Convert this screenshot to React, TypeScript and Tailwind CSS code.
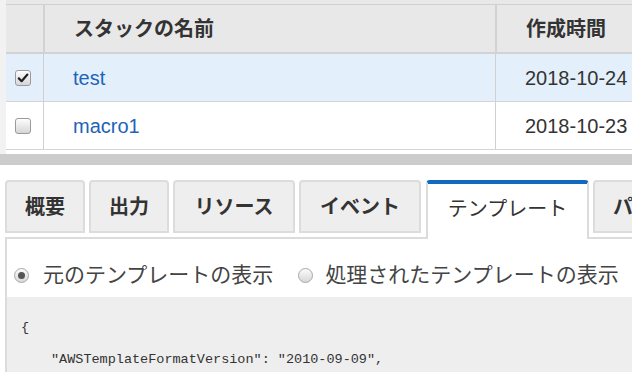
import React from "react";

function Checkbox({ checked }: { checked?: boolean }) {
  return (
    <div className="w-[16px] h-[16px] rounded-[3px] border border-[#9a9a9a] bg-gradient-to-b from-[#fdfdfd] to-[#d6d6d6] flex items-center justify-center shadow-[inset_0_1px_1px_rgba(255,255,255,0.8)]">
      {checked && (
        <svg width="12" height="12" viewBox="0 0 12 12">
          <path d="M1.8 6.4 L4.6 9.2 L10.4 2.6" fill="none" stroke="#222" strokeWidth="2.2" strokeLinecap="round" strokeLinejoin="round" />
        </svg>
      )}
    </div>
  );
}

function Radio({ checked }: { checked?: boolean }) {
  return (
    <div className="w-[15px] h-[15px] rounded-full border border-[#a8a8a8] bg-gradient-to-b from-[#fbfbfb] to-[#d8d8d8] flex items-center justify-center">
      {checked && <div className="w-[7px] h-[7px] rounded-full bg-[#555]" />}
    </div>
  );
}

export default function App() {
  return (
    <div className="w-[632px] h-[372px] overflow-hidden bg-white font-['Liberation_Sans','Noto_Sans_CJK_JP',sans-serif] text-[#333]">
      <div className="w-[900px]">
        {/* table */}
        <div className="flex">
          <div className="w-[6px] bg-[#f2f2f2]" />
          <div className="flex-1">
            <div className="h-[4px] bg-[#e8e8e8]" />
            <div className="h-px bg-[#d0d0d0]" />
            <div className="flex h-[49px] bg-[#e8e8e8] border-b-2 border-[#d2d2d2] text-[20px] font-bold text-[#333]">
              <div className="w-[39px] border-r-2 border-[#d2d2d2]" />
              <div className="w-[452px] border-r-2 border-[#d2d2d2] pl-[29px] flex items-center">スタックの名前</div>
              <div className="pl-[29px] flex items-center">作成時間</div>
            </div>
            <div className="flex h-[48px] bg-[#e3f0fc] border-b border-[#d4d4d4] text-[20px]">
              <div className="w-[38px] border-r border-[#d0d0d0] flex items-center pl-[9px]">
                <Checkbox checked />
              </div>
              <div className="w-[452px] border-r border-[#d0d0d0] pl-[29px] flex items-center text-[#1e63b8]">test</div>
              <div className="pl-[29px] flex items-center text-[#333]">2018-10-24 16:47:55 UTC+0900</div>
            </div>
            <div className="flex h-[48px] bg-white border-b border-[#d4d4d4] text-[20px]">
              <div className="w-[38px] border-r border-[#d0d0d0] flex items-center pl-[9px]">
                <Checkbox />
              </div>
              <div className="w-[452px] border-r border-[#d0d0d0] pl-[29px] flex items-center text-[#1e63b8]">macro1</div>
              <div className="pl-[29px] flex items-center text-[#333]">2018-10-23 20:25:12 UTC+0900</div>
            </div>
            <div className="h-[4px] bg-white" />
          </div>
        </div>
        <div className="h-[11px] bg-[#cccccc]" />
        <div className="h-[15px] bg-white" />

        {/* tabs */}
        <div className="flex items-start gap-[4px] pl-[5px] text-[20px] font-bold text-[#333]">
          <div className="w-[80px] h-[53px] border-2 border-[#dcdcdc] rounded-t-[4px] bg-[#eeeeee] flex items-center justify-center">概要</div>
          <div className="w-[80px] h-[53px] border-2 border-[#dcdcdc] rounded-t-[4px] bg-[#eeeeee] flex items-center justify-center">出力</div>
          <div className="w-[122px] h-[53px] border-2 border-[#dcdcdc] rounded-t-[4px] bg-[#eeeeee] flex items-center justify-center">リソース</div>
          <div className="w-[122px] h-[53px] border-2 border-[#dcdcdc] rounded-t-[4px] bg-[#eeeeee] flex items-center justify-center">イベント</div>
          <div className="relative z-10 ml-[1px] w-[163px] h-[59px] -mb-[2px] border-t-[4px] border-x-2 border-t-[#1269c0] border-x-[#dcdcdc] rounded-t-[4px] bg-white flex justify-center pt-[11px] font-normal text-[#333]">
            <span className="leading-[28px]">テンプレート</span>
          </div>
          <div className="h-[53px] border-2 border-[#dcdcdc] rounded-t-[4px] bg-[#eeeeee] flex items-center px-[18px]">パラメータ</div>
        </div>

        {/* panel */}
        <div className="ml-[5px] border-t-2 border-l-2 border-[#dcdcdc]">
          <div className="flex items-center pt-[22px] pb-[8px] h-[58px] text-[21px] text-[#444]">
            <div className="ml-[7px]">
              <Radio checked />
            </div>
            <span className="ml-[14px] leading-[28px]">元のテンプレートの表示</span>
            <div className="ml-[25px]">
              <Radio />
            </div>
            <span className="ml-[12px] leading-[28px]">処理されたテンプレートの表示</span>
          </div>
          <div className="bg-[#eeeeee] h-[120px] pt-[15px] pl-[14px] font-['Liberation_Mono',monospace] text-[13.5px] leading-[32px] text-[#333] whitespace-pre">
            <div>{"{"}</div>
            <div className="pl-[30px]">{"\"AWSTemplateFormatVersion\": \"2010-09-09\","}</div>
          </div>
        </div>
      </div>
    </div>
  );
}
